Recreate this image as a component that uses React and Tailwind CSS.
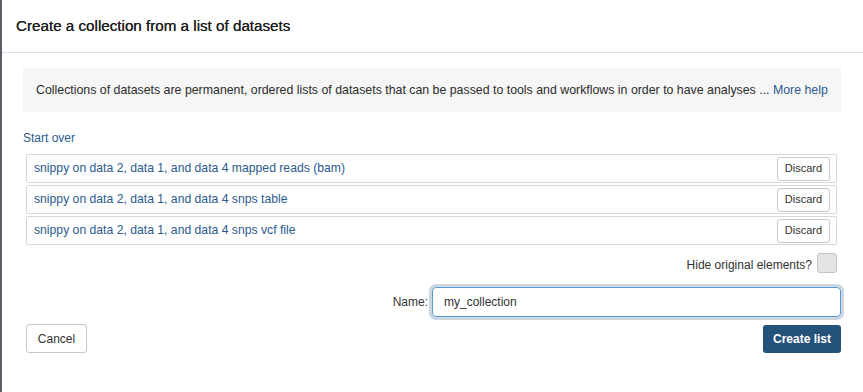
import React, { useState } from "react";

const ELEMENTS = [
  "snippy on data 2, data 1, and data 4 mapped reads (bam)",
  "snippy on data 2, data 1, and data 4 snps table",
  "snippy on data 2, data 1, and data 4 snps vcf file",
];

const App = () => {
  const [name, setName] = useState("my_collection");

  return (
    <div
      className="w-[863px] h-[392px] bg-white border-l-2 border-[#5a5f66] overflow-hidden text-[#212529]"
      style={{ fontFamily: '"Liberation Sans", Arial, sans-serif' }}
    >
      {/* Header */}
      <div className="h-[53px] border-b border-[#dcdfe6] flex items-center pl-[14px]">
        <h1 className="text-[15.2px] font-normal text-[#1f1f1f] [text-shadow:0_0_0.3px_#1f1f1f]">
          Create a collection from a list of datasets
        </h1>
      </div>

      <div className="pl-[21px] pr-[22px] pt-[15px]">
        {/* Help */}
        <div className="bg-[#f6f6f6] h-[44px] flex items-center pl-[13px] text-[12.35px] text-[#2b2b2b] whitespace-nowrap">
          Collections of datasets are permanent, ordered lists of datasets that can be passed to tools and
          workflows in order to have analyses ...&nbsp;
          <a href="#" className="text-[#2c5a8c]">More help</a>
        </div>

        <a href="#" className="block mt-[18px] text-[12px] text-[#2c5a8c] leading-[16px]">
          Start over
        </a>

        {/* Element list */}
        <div className="mt-[8px] ml-[3px] mr-[4px] flex flex-col gap-[2px]">
          {ELEMENTS.map((el) => (
            <div
              key={el}
              className="h-[29px] border border-[#d8d8d8] rounded-[2px] flex items-center justify-between pl-[7px] pr-[6px]"
            >
              <span className="text-[12.2px] text-[#2c5a8c]">{el}</span>
              <button className="h-[24px] w-[53px] border border-[#c8c8c8] rounded-[3px] bg-white text-[11px] text-[#333]">
                Discard
              </button>
            </div>
          ))}
        </div>

        <div className="flex items-center justify-end gap-[5px] mt-[8px] mr-[4px]">
          <span className="text-[12px] text-[#333] translate-y-[2px]">Hide original elements?</span>
          <span className="w-[20px] h-[20px] rounded-[3px] bg-[#e4e4e4] border border-[#c4c4c4]" />
        </div>

        <div className="flex items-center justify-end mt-[14px] gap-[4px]">
          <label className="text-[12px] text-[#333]">Name:</label>
          <input
            value={name}
            onChange={(e) => setName(e.target.value)}
            className="w-[409px] h-[30px] rounded-[4px] border border-[#5b9bd5] shadow-[0_0_0_3px_rgba(160,180,200,0.55)] pl-[11px] text-[12px] text-[#333] outline-none"
          />
        </div>

        <div className="flex items-center justify-between mt-[7px] ml-[3px]">
          <button className="h-[29px] w-[61px] border border-[#c8c8c8] rounded-[3px] bg-white text-[12px] text-[#333]">
            Cancel
          </button>
          <button className="h-[28px] w-[78px] rounded-[3px] bg-[#25527b] text-[12px] font-semibold text-white">
            Create list
          </button>
        </div>
      </div>
    </div>
  );
};

export default App;
